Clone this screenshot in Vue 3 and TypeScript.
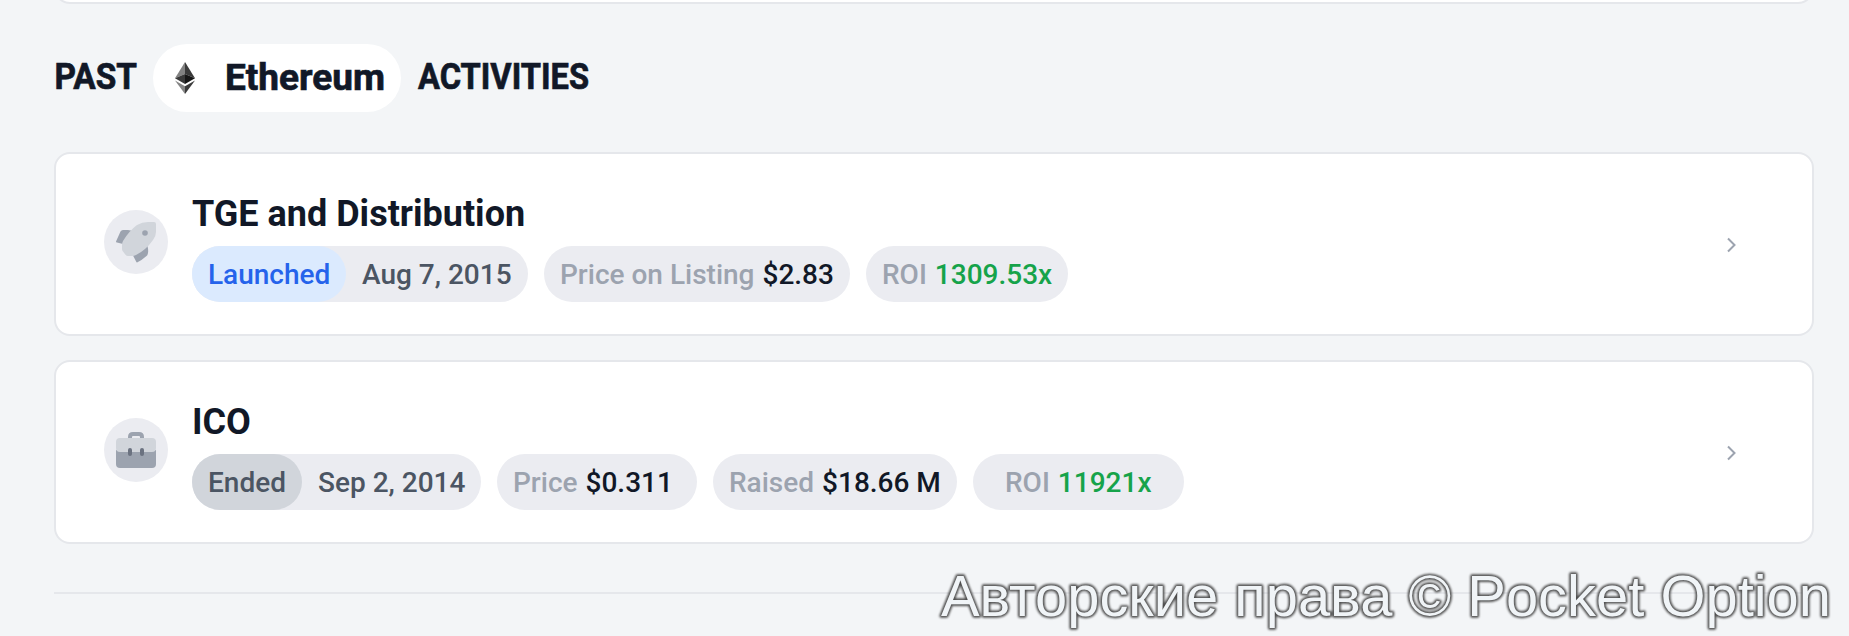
<script setup lang="ts">
interface Detail {
  label: string
  value: string
  width: number
  positive?: boolean
  inset?: boolean
}

interface Activity {
  title: string
  icon: 'rocket' | 'briefcase'
  status: string
  statusKind: 'launched' | 'ended'
  statusWidth: number
  date: string
  dateWidth: number
  details: Detail[]
}

const activities: Activity[] = [
  {
    title: 'TGE and Distribution',
    icon: 'rocket',
    status: 'Launched',
    statusKind: 'launched',
    statusWidth: 154,
    date: 'Aug 7, 2015',
    dateWidth: 336,
    details: [
      { label: 'Price on Listing', value: '$2.83', width: 306 },
      { label: 'ROI', value: '1309.53x', width: 202, positive: true },
    ],
  },
  {
    title: 'ICO',
    icon: 'briefcase',
    status: 'Ended',
    statusKind: 'ended',
    statusWidth: 110,
    date: 'Sep 2, 2014',
    dateWidth: 289,
    details: [
      { label: 'Price', value: '$0.311', width: 200 },
      { label: 'Raised', value: '$18.66 M', width: 244 },
      { label: 'ROI', value: '11921x', width: 211, positive: true, inset: true },
    ],
  },
]

const watermark = 'Авторские права © Pocket Option'
</script>

<template>
  <main class="page">
    <div class="previous-card"></div>

    <h2 class="heading">
      <svg class="word" width="82" height="40" aria-label="PAST">
        <text x="-0.5" y="32" textLength="82.5" lengthAdjust="spacingAndGlyphs">PAST</text>
      </svg>
      <span class="coin">
        <svg class="eth" width="20" height="32" viewBox="0 0 20 32">
          <path d="M10 0 0 16.3 10 12Z" fill="#828282" />
          <path d="M10 0v12l10 4.3Z" fill="#3a3a3a" />
          <path d="M0 16.3 10 12v10Z" fill="#393939" />
          <path d="M20 16.3 10 12v10Z" fill="#161616" />
          <path d="m0 18.5 10 5.7V32Z" fill="#858585" />
          <path d="m20 18.5-10 5.7V32Z" fill="#3b3b3b" />
        </svg>
        <svg class="word" width="160" height="40" aria-label="Ethereum">
          <text x="0" y="32" textLength="160" lengthAdjust="spacingAndGlyphs">Ethereum</text>
        </svg>
      </span>
      <svg class="word" width="174" height="40" aria-label="ACTIVITIES">
        <text x="1" y="32" textLength="171" lengthAdjust="spacingAndGlyphs">ACTIVITIES</text>
      </svg>
    </h2>

    <section class="list">
      <article v-for="item in activities" :key="item.title" class="card">
        <span class="badge">
          <svg v-if="item.icon === 'rocket'" width="64" height="64" viewBox="0 0 64 64">
            <path d="M12 31.5 16.500 21.500q.8-1.500 2.500-1.500h5l5 1-8 13.500-8-2q-1.200-.2-1-1Z" fill="#9ca3af" />
            <path d="m29 45.500 14.500-9.500q1 4 .5 7-.2 2-1.500 3-4.500 4-9 6.300-1 .4-1.400-.8Z" fill="#9ca3af" />
            <path d="M50 12q2 0 2 2v8q0 4-3 8-7 10-17 15-2 1-4 1h-4q-1.500 0-2.500-1.200l-2.700-3.600q-.8-1-.8-2.200v-4q0-2 1-4 6-10 14-16 5-3 11-3Z" fill="#d1d5db" />
            <circle cx="41" cy="23" r="2.8" fill="#9ca3af" />
          </svg>
          <svg v-else width="64" height="64" viewBox="0 0 64 64">
            <path d="M26 22v-3q0-3 3-3h6q3 0 3 3v3" fill="none" stroke="#9ca3af" stroke-width="4" />
            <path d="M12 32h40v14q0 4-4 4H16q-4 0-4-4Z" fill="#9ca3af" />
            <path d="M16 20h32q4 0 4 4v6q0 4-4 4H16q-4 0-4-4v-6q0-4 4-4Z" fill="#d1d5db" />
            <rect x="24" y="30" width="4" height="8" rx="2" fill="#6b7280" />
            <rect x="36" y="30" width="4" height="8" rx="2" fill="#6b7280" />
          </svg>
        </span>
        <div class="body">
          <h3 class="title">{{ item.title }}</h3>
          <div class="pills">
            <div class="pill status-pill" :style="{ width: item.dateWidth + 'px' }">
              <span class="status" :class="item.statusKind" :style="{ width: item.statusWidth + 'px' }">{{ item.status }}</span>
              <span class="date">{{ item.date }}</span>
            </div>
            <div v-for="d in item.details" :key="d.label" class="pill" :class="{ padded: d.inset }" :style="{ width: d.width + 'px' }">
              <span class="label">{{ d.label }}</span>
              <span class="value" :class="{ positive: d.positive }">{{ d.value }}</span>
            </div>
          </div>
        </div>
        <svg class="chevron" width="12" height="18" viewBox="0 0 12 18">
          <path d="m2 2.5 6.5 6.500L2 15.500" fill="none" stroke="#9ca3af" stroke-width="2" />
        </svg>
      </article>
    </section>

    <hr class="divider" />

    <svg class="watermark" width="920" height="80">
      <text class="shade" x="12" y="60" textLength="890" lengthAdjust="spacingAndGlyphs">{{ watermark }}</text>
      <text class="face" x="12" y="60" textLength="890" lengthAdjust="spacingAndGlyphs" aria-hidden="true">{{ watermark }}</text>
    </svg>
  </main>
</template>

<style>
body {
  margin: 0;
  background: #f3f5f7;
}
</style>

<style scoped>
.page {
  position: relative;
  box-sizing: border-box;
  width: 1849px;
  height: 636px;
  padding: 0 35px 0 54px;
  overflow: hidden;
  background: #f3f5f7;
  font-family: Roboto, sans-serif;
  color: #111827;
}
.previous-card {
  box-sizing: border-box;
  height: 36px;
  margin-top: -32px;
  border: 2px solid #e5e7eb;
  border-radius: 16px;
  background: #fff;
}
.heading {
  display: flex;
  align-items: center;
  height: 68px;
  margin: 40px 0;
}
.word {
  display: block;
  flex: none;
  overflow: visible;
  fill: #111827;
  stroke: #111827;
  stroke-width: 0.7px;
  font: 700 37px Roboto, sans-serif;
}
.heading > .word {
  margin-left: 1px;
  margin-top: -2px;
}
.coin {
  display: flex;
  align-items: center;
  box-sizing: border-box;
  width: 248px;
  height: 68px;
  margin: 0 15px 0 16px;
  padding-left: 22px;
  border-radius: 34px;
  background: #fff;
}
.eth {
  flex: none;
  margin-right: 30px;
}
.list {
  display: flex;
  flex-direction: column;
  gap: 24px;
}
.card {
  display: flex;
  align-items: center;
  box-sizing: border-box;
  height: 184px;
  padding: 0 74px 0 48px;
  border: 2px solid #e5e7eb;
  border-radius: 16px;
  background: #fff;
}
.badge {
  width: 64px;
  height: 64px;
  margin: 0 24px 4px 0;
  border-radius: 50%;
  background: #ebecf1;
}
.badge svg {
  display: block;
}
.body {
  flex: 1;
  padding-top: 8px;
}
.title {
  height: 40px;
  margin: 0 0 12px;
  font-size: 36px;
  font-weight: 700;
  line-height: 40px;
}
.pills {
  display: flex;
  gap: 16px;
}
.pill {
  display: flex;
  box-sizing: border-box;
  height: 56px;
  padding-left: 16px;
  border-radius: 28px;
  background: #ebecf1;
  font-size: 28px;
  font-weight: 500;
  line-height: 58px;
  white-space: nowrap;
}
.padded {
  padding-left: 32px;
}
.status-pill {
  padding-left: 0;
}
.status {
  box-sizing: border-box;
  height: 56px;
  padding-left: 16px;
  border-radius: 28px;
}
.launched {
  background: #dbeafe;
  color: #2563eb;
}
.ended {
  background: #d1d5db;
  color: #4b5563;
}
.date {
  margin-left: 16px;
  color: #4b5563;
}
.label {
  margin-right: 8px;
  color: #9ca3af;
}
.positive {
  color: #16a34a;
}
.chevron {
  flex: none;
  margin-top: 2px;
}
.divider {
  height: 2px;
  margin: 48px 0 0;
  border: 0;
  background: #e5e7eb;
}
.watermark {
  position: absolute;
  left: 929px;
  top: 556px;
  font: 57px "Liberation Sans", Arial, sans-serif;
}
.shade {
  fill: #4d4d4d;
  stroke: #4d4d4d;
  stroke-width: 3.4px;
  stroke-linejoin: round;
  filter: blur(1.2px);
}
.face {
  fill: #f0f4f7;
}
</style>
